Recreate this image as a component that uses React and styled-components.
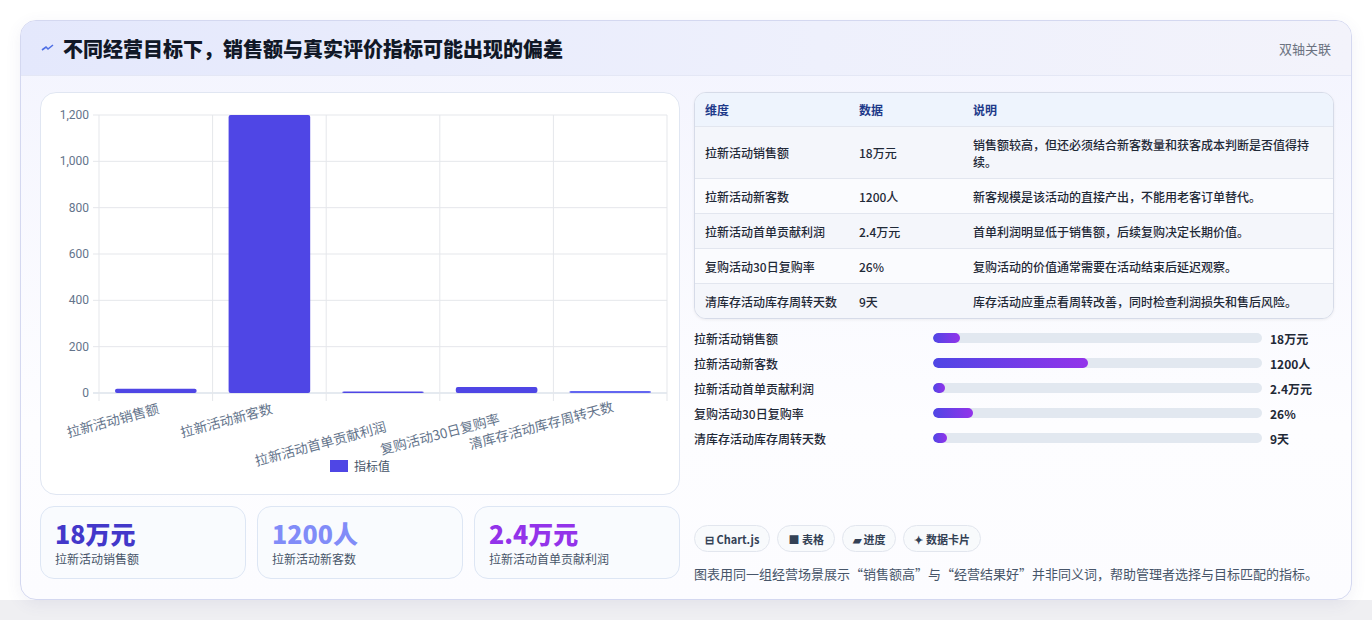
import React from "react";
import styled, { createGlobalStyle } from "styled-components";

const G = createGlobalStyle`
  body{margin:0;background:#f3f4f6;font-family:"Noto Sans CJK SC","Noto Sans",sans-serif;}
`;
const Page = styled.div`padding:20px;height:620px;box-sizing:border-box;background:linear-gradient(#fff 0,#fff 600px,#efeff2 600px);`;
const Card = styled.div`
  width:1332px;height:580px;box-sizing:border-box;border:1px solid #d4d8f0;border-radius:16px;overflow:hidden;
  background:linear-gradient(180deg,#f3f4fe,#fdfdff 70%,#fcfcff);box-shadow:0 4px 16px rgba(80,80,140,.08);
`;
const Header = styled.div`
  height:55px;box-sizing:border-box;display:flex;align-items:center;justify-content:space-between;padding:0 20px;
  background:linear-gradient(90deg,#e4e8fc,#eef0fc 60%,#f3f3fb);border-bottom:1px solid #e4e7f5;
`;
const Title = styled.h1`margin:0;font-size:20px;font-weight:800;color:#111827;display:flex;align-items:center;gap:8px;`;
const Tag = styled.span`font-size:13px;color:#6b7280;`;
const Body = styled.div`display:grid;grid-template-columns:640px 640px;gap:14px;padding:16px 19px 0 19px;`;
const Col = styled.div`display:flex;flex-direction:column;`;
const ChartCard = styled.div`height:403px;box-sizing:border-box;border:1px solid #e0e6f2;border-radius:16px;background:#fff;`;
const Stats = styled.div`display:grid;grid-template-columns:repeat(3,1fr);gap:11px;margin-top:11px;`;
const Stat = styled.div`height:73px;box-sizing:border-box;border:1px solid #dde6f4;border-radius:14px;background:#f9fbfe;padding:10px 14px;`;
const StatVal = styled.div`font-size:25px;font-weight:800;color:${p=>p.c};line-height:32px;`;
const StatLbl = styled.div`font-size:12px;color:#475569;margin-top:1px;`;
const Table = styled.div`border:1px solid #d6dbe8;border-radius:12px;overflow:hidden;background:#f7f9fd;box-shadow:0 1px 3px rgba(0,0,0,.06);`;
const Row = styled.div`display:grid;grid-template-columns:154px 114px 1fr;padding:0 10px;height:${p=>p.h}px;box-sizing:border-box;align-items:center;
  font-size:12px;color:${p=>p.head?"#1e3a8a":"#1f2937"};font-weight:${p=>p.head?600:500};line-height:17px;
  background:${p=>p.head?"#eef4fd":p.alt?"#f4f6fb":"#fafbfe"};border-top:${p=>p.head?"none":"1px solid #e2e6ef"};`;
const Bars = styled.div`display:flex;flex-direction:column;gap:7px;margin-top:10px;`;
const BarRow = styled.div`display:grid;grid-template-columns:231px 329px 1fr;column-gap:8px;align-items:center;height:18px;font-size:12px;color:#1f2937;font-weight:500;`;
const Track = styled.div`height:10px;border-radius:5px;background:#e2e8f0;overflow:hidden;`;
const Fill = styled.div`height:100%;border-radius:5px;background:linear-gradient(90deg,#4f46e5,#9333ea);`;
const BarVal = styled.span`font-weight:700;color:#1f2937;`;
const Chips = styled.div`display:flex;gap:7px;margin-top:78px;`;
const Chip = styled.span`height:27px;box-sizing:border-box;padding:0 10px;border:1px solid #e2e6ee;border-radius:14px;background:#f8fafc;
  display:inline-flex;align-items:center;gap:4px;font-size:11px;font-weight:600;color:#334155;`;
const Note = styled.p`margin:12px 0 0;font-size:13px;color:#475569;`;

const cats=["拉新活动销售额","拉新活动新客数","拉新活动首单贡献利润","复购活动30日复购率","清库存活动库存周转天数"];
const vals=[18,1200,2.4,26,9];

function Chart(){
  const x0=58,x1=626,y0=300,y1=22,h=y0-y1,cw=(x1-x0)/5;
  const ticks=[0,200,400,600,800,1000,1200];
  const ly=[320,320,338,330,318];
  return (
    <svg width="638" height="401" style={{display:"block"}}>
      {ticks.map(t=>{const y=y0-t/1200*h;return <g key={t}>
        <line x1={x0-6} x2={x1} y1={y} y2={y} stroke={t===0?"#cbd5e1":"#e5e7eb"}/>
        <text x={x0-10} y={y+4} textAnchor="end" fontSize="12" fill="#64748b" fontFamily="Roboto,sans-serif">{t.toLocaleString("en-US")}</text></g>})}
      {[0,1,2,3,4,5].map(i=><line key={i} x1={x0+i*cw} x2={x0+i*cw} y1={y1} y2={y0+8} stroke="#e5e7eb"/>)}
      {vals.map((v,i)=>{const bh=Math.max(v/1200*h,v>0?1.5:0);return <rect key={i} x={x0+i*cw+16} y={y0-bh} width={cw-32} height={bh} rx="2" fill={i===4?"#6366f1":"#4f46e5"}/>})}
      {cats.map((c,i)=><text key={c} transform={`translate(${x0+i*cw+cw/2+4},${ly[i]}) rotate(-15)`} textAnchor="end" fontSize="13.5" fill="#64748b" fontFamily="Noto Sans CJK SC,sans-serif">{c}</text>)}
      <rect x="289" y="367" width="18" height="12" fill="#4f46e5"/>
      <text x="313" y="378" fontSize="12" fill="#475569" fontFamily="Noto Sans CJK SC,sans-serif">指标值</text>
    </svg>
  );
}

const rows=[
  ["拉新活动销售额","18万元","销售额较高，但还必须结合新客数量和获客成本判断是否值得持续。",52],
  ["拉新活动新客数","1200人","新客规模是该活动的直接产出，不能用老客订单替代。",35],
  ["拉新活动首单贡献利润","2.4万元","首单利润明显低于销售额，后续复购决定长期价值。",35],
  ["复购活动30日复购率","26%","复购活动的价值通常需要在活动结束后延迟观察。",35],
  ["清库存活动库存周转天数","9天","库存活动应重点看周转改善，同时检查利润损失和售后风险。",35],
];
const pct=[8.3,47,3.6,12.2,4.3];

export default function App(){
  return <Page><G/>
    <Card>
      <Header>
        <Title><svg width="14" height="14" viewBox="0 0 14 14"><path d="M1 9 L5 6 L7 8 L12 4" stroke="#4f6fe5" strokeWidth="1.6" fill="none"/></svg>不同经营目标下，销售额与真实评价指标可能出现的偏差</Title>
        <Tag>双轴关联</Tag>
      </Header>
      <Body>
        <Col>
          <ChartCard><Chart/></ChartCard>
          <Stats>
            <Stat><StatVal c="#4338ca">18万元</StatVal><StatLbl>拉新活动销售额</StatLbl></Stat>
            <Stat><StatVal c="#818cf8">1200人</StatVal><StatLbl>拉新活动新客数</StatLbl></Stat>
            <Stat><StatVal c="#9333ea">2.4万元</StatVal><StatLbl>拉新活动首单贡献利润</StatLbl></Stat>
          </Stats>
        </Col>
        <Col>
          <Table>
            <Row head h={33}><span>维度</span><span>数据</span><span>说明</span></Row>
            {rows.map((r,i)=><Row key={r[0]} h={r[3]} alt={i%2===0}><span>{r[0]}</span><span>{r[1]}</span><span style={{paddingRight:14}}>{r[2]}</span></Row>)}
          </Table>
          <Bars>
            {rows.map((r,i)=><BarRow key={r[0]}><span>{r[0]}</span><Track><Fill style={{width:pct[i]+"%"}}/></Track><BarVal>{r[1]}</BarVal></BarRow>)}
          </Bars>
          <Chips>
            <Chip>⊟ Chart.js</Chip><Chip>■ 表格</Chip><Chip>▰ 进度</Chip><Chip>✦ 数据卡片</Chip>
          </Chips>
          <Note>图表用同一组经营场景展示“销售额高”与“经营结果好”并非同义词，帮助管理者选择与目标匹配的指标。</Note>
        </Col>
      </Body>
    </Card>
  </Page>;
}
